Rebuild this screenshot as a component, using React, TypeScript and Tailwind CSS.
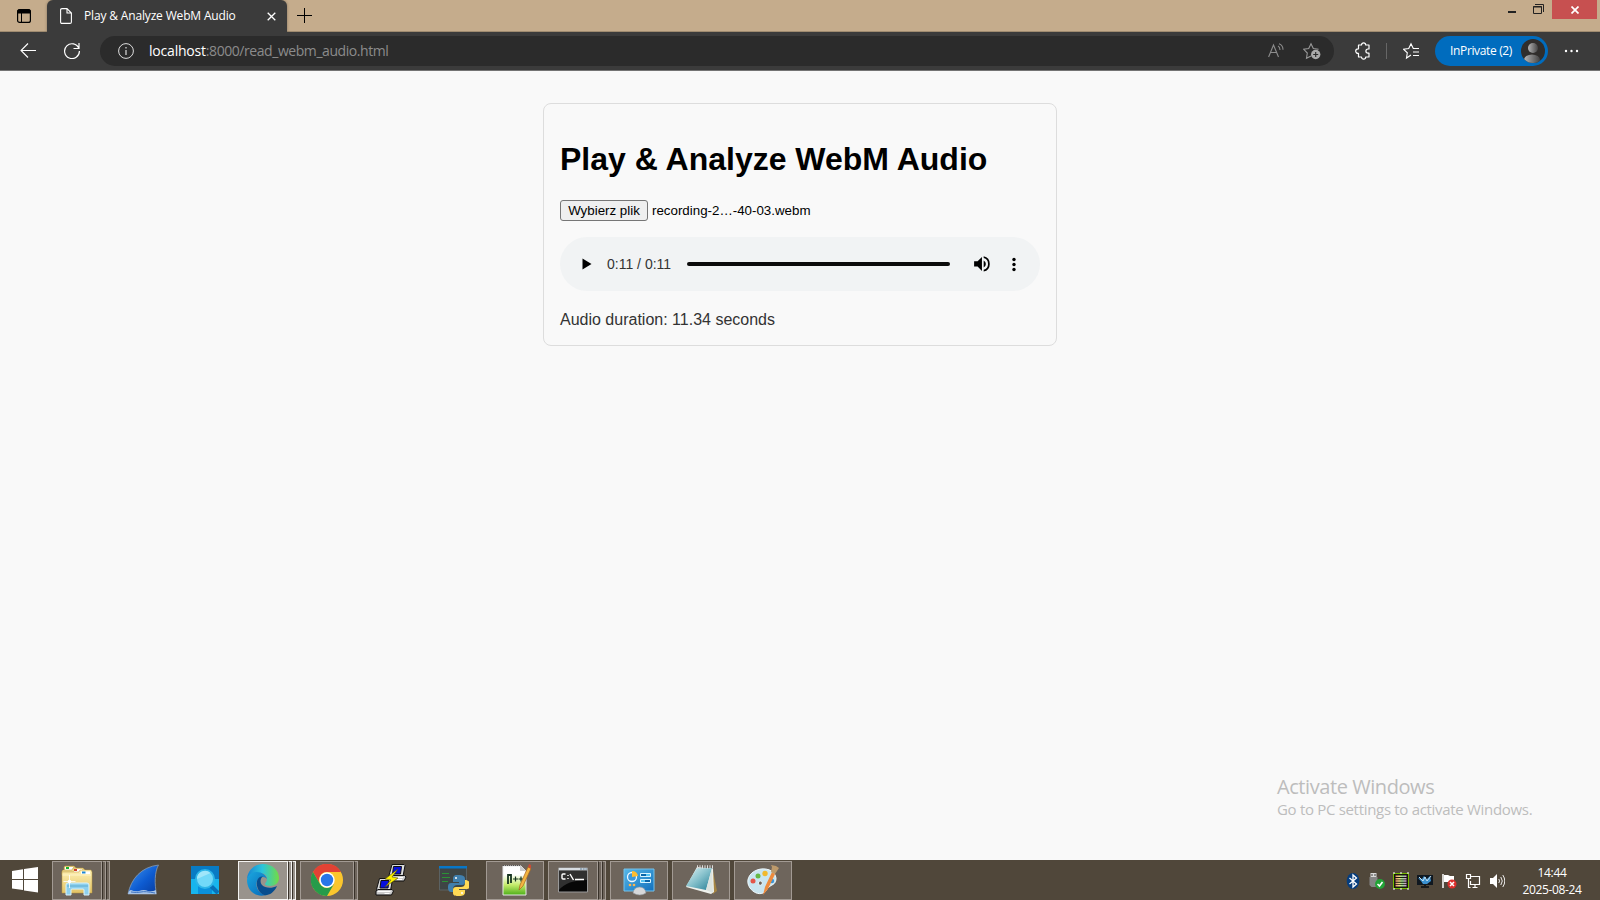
import type { ReactNode } from "react";

const ui = "font-['Open_Sans','Noto_Sans',sans-serif]";
const arial = "font-['Liberation_Sans',Arial,sans-serif]";

function Slot({ children, open = false, active = false, stack = 1 }: { children: ReactNode; open?: boolean; active?: boolean; stack?: number }) {
  const tone = active ? "border-[#f4f3f1] bg-[#99938c]" : open ? "border-[#a29a93] bg-[#6e655c]" : "border-transparent";
  return (
    <div className="flex h-[39px] w-[58px]">
      <div className={`flex min-w-0 flex-1 items-center justify-center border pr-px pb-px ${tone}`}>{children}</div>
      {stack > 1 && <div className={`w-1 border border-l-[#39322a] ${tone}`} />}
      {stack > 2 && <div className={`w-1 border border-l-[#39322a] ${tone}`} />}
    </div>
  );
}

function Art({ children }: { children: ReactNode }) {
  return <svg width="32" height="32" viewBox="0 0 32 32" className="shrink-0">{children}</svg>;
}

function Explorer() {
  return (
    <Art>
      <defs><linearGradient id="folder" x2="0" y2="1"><stop stopColor="#fff2b5" /><stop offset="1" stopColor="#e2c366" /></linearGradient></defs>
      <path d="M3 3l1-1h9l2 2v6H3z" fill="#e6cf7e" stroke="#b8973c" strokeWidth=".5" />
      <path d="M4 3h8v3H4z" fill="#fff" /><path d="M5 3h3v2H5z" fill="#18b32c" />
      <path d="M1 7l1-1h9l1-2h10l2 2v5H1z" fill="#ecd88c" stroke="#b8973c" strokeWidth=".5" />
      <path d="M13 5h8v3h-8z" fill="#fff" /><path d="M13 5h3v2h-3z" fill="#d23c2a" />
      <path d="M1 8h17l1-2h11l1 2v21H1z" fill="url(#folder)" stroke="#b8973c" strokeWidth=".5" />
      <path d="M20 7.500h9v2.500h-9z" fill="#fff" /><path d="M21 7.500h3.500v2H21z" fill="#1e88d2" />
      <path d="M1.500 11H30" stroke="#fff8d0" strokeWidth=".8" />
      <path d="M5 21q0-2 2-2h19q2 0 2 2v10h-5v-5q0-1-1-1H11q-1 0-1 1v5H5z" fill="#8ed0ed" stroke="#d9f3fc" />
      <path d="M6 22h21" stroke="#5cacd2" />
      <path d="M8.500 11v13M2.500 17.500h12" stroke="#fff" strokeWidth=".8" /><circle cx="8.500" cy="17.500" r="1.800" fill="#fff" />
    </Art>
  );
}
function Shark() {
  return (
    <Art>
      <defs><linearGradient id="fin" x2="1" y2="1"><stop stopColor="#4298ef" /><stop offset=".55" stopColor="#0d5bd1" /><stop offset="1" stopColor="#083a9b" /></linearGradient></defs>
      <path d="M1 30C4 15 14 3 31.500 1c-4 7-4 19-2 29z" fill="url(#fin)" stroke="#8d9ba9" strokeWidth=".8" />
      <path d="M1 30q1-4 3-4 4 2 8 1 5-2 9 0 4 1 8-1v4z" fill="#a9c5e8" /><path d="M4 28q6 1 10 0t14 1" stroke="#3f74c1" fill="none" />
    </Art>
  );
}
function Search() {
  return (
    <Art>
      <path d="M2 2h28v28H2z" fill="#0a91dc" /><path d="M2 2h28v13H2z" fill="#087bc4" />
      <path d="M2 15h7v15H2zM23 15h7v15h-7z" fill="#17b5ed" />
      <path d="m22 22 7 7" stroke="#0871b9" strokeWidth="4" />
      <circle cx="16" cy="15" r="9" fill="#72d9f8" stroke="#2db5e8" strokeWidth="2" />
      <path d="M8 15a8 8 0 0 1 13.500-6z" fill="#a0e6fa" />
    </Art>
  );
}
function Edge() {
  return (
    <Art>
      <defs>
        <linearGradient id="edgeTop"><stop stopColor="#1685d4" /><stop offset=".48" stopColor="#2bc4dc" /><stop offset="1" stopColor="#72dc43" /></linearGradient>
        <linearGradient id="edgeMid" y2="1"><stop stopColor="#1aa7df" /><stop offset="1" stopColor="#0868b8" /></linearGradient>
      </defs>
      <path d="M0 16C0 7 7 0 16 0c10 0 16 7 16 14 0 5-4 8-9 8-3 0-5-1-5-2s2-2 2-5c0-4-3-6-8-6-6 0-11 2-12 7" fill="url(#edgeTop)" />
      <path d="M0 16C1 11 5 8 10 8c5 0 9 3 10 7-2-3-8-3-10 2-2 6 2 13 9 14C8 34 0 26 0 16" fill="url(#edgeMid)" />
      <path d="M10 17c1-4 4-5 6-4.500-3 2-3 6-1 8.500 3 3 9 4 15 1-3 7-9 10-13 9-5-2-8-8-7-14" fill="#084d8e" />
    </Art>
  );
}
function Chrome() {
  return (
    <Art>
      <circle cx="16" cy="16" r="16" fill="#fbc62d" />
      <path d="M2 8A16 16 0 0 1 30 8H16a8 8 0 0 0-7 12z" fill="#e24234" />
      <path d="M2 8a16 16 0 0 0 14 24l7-12q-8 8-14 0z" fill="#269b4a" />
      <circle cx="16" cy="16" r="7.700" fill="#fff" /><circle cx="16" cy="16" r="6.200" fill="#2876e8" />
    </Art>
  );
}
function Putty() {
  const computer = <><path d="M4 .500h12l1 1-2 11H2l-1-1z" fill="#ddd" stroke="#111" /><path d="M5.500 2.500h8l-1 7.500H4.500z" fill="#0710dc" stroke="#111" /><path d="m.5 13 2-1.500h14l1.500 1.500-2 4H.5z" fill="#ccc" stroke="#111" /><path d="M2 13.500h13M9 15.500h5" stroke="#fff" /></>;
  return <Art><g transform="translate(13 0)">{computer}</g><g transform="translate(.5 14)">{computer}</g><path d="m23 5-13 10 6 1-6 7 13-9-6-1z" fill="#fff200" stroke="#555000" strokeWidth=".6" /></Art>;
}
function Python() {
  return (
    <Art>
      <path d="M2.500 3h27v23h-27z" fill="#3e4545" stroke="#5b6263" /><path d="M2 2h28v2.500H2z" fill="#0877c7" />
      <path d="M5 9.500h7M5 13.500h8M5 17.500h6" stroke="#2b9234" strokeWidth="1.200" />
      <g transform="translate(11 11)">
        <path d="M10 0C5 0 5 2 5 5v2h6v1H3c-3 0-3 3-3 5s1 4 3 4h2v-3c0-3 2-4 4-4h5c2 0 3-1 3-3V4c0-3-2-4-7-4" fill="#407fae" />
        <path d="M17 5v3c0 3-2 4-4 4H8c-2 0-3 1-3 3v3c0 3 3 3 6 3 4 0 6-1 6-4v-2h-6v-1h8c3 0 3-3 3-5s-2-4-5-4" fill="#ffda55" />
        <circle cx="8" cy="3" r="1" fill="#fff" /><circle cx="14" cy="18" r="1" fill="#fff" />
      </g>
    </Art>
  );
}
function NotepadPlus() {
  return (
    <Art>
      <defs><linearGradient id="npp" y2="1" x2="0"><stop offset=".3" stopColor="#fff" /><stop offset=".65" stopColor="#c5ec6b" /><stop offset="1" stopColor="#4cae18" /></linearGradient></defs>
      <path d="M4 2h18l5 5v24H4z" fill="url(#npp)" stroke="#e8e8e8" /><path d="M4 1.500h17" stroke="#555" strokeDasharray="1 1" /><path d="M21 1v6h6z" fill="#ccc" />
      <path d="M9 20v-9h3v8" fill="none" stroke="#163320" strokeWidth="1.800" /><path d="M16.500 12.500v5M14 15h5M22 12.500v5M19.500 15h5" stroke="#163320" strokeWidth="1.200" />
      <path d="m20 26 1-5L29 3l3 1.500L24 22z" fill="#f3b542" stroke="#a76422" strokeWidth=".7" /><path d="m29 3 1-3 3 1.500-1 3z" fill="#ca4b35" />
    </Art>
  );
}
function Command() {
  return (
    <Art><path d="M1.500 4h29v24h-29z" fill="#070707" stroke="#999" /><path d="M2 4h28v2.500H2z" fill="#d8dde1" /><path d="M23 5h2m.7 0h2m.7 0h1.500" stroke="#5a7990" /><path d="M2 7h28v9Q10 16 2 26z" fill="#303030" /><path d="M8.500 10H6q-1 0-1 1v3q0 1 1 1h2.500M11 11v1M11 14v1M13 10l3.500 6M18 15.500h9" fill="none" stroke="#fff" strokeWidth="1.400" /></Art>
  );
}
function Control() {
  return (
    <Art><defs><linearGradient id="control" y2="1"><stop stopColor="#55b7e8" /><stop offset="1" stopColor="#1270bd" /></linearGradient></defs><path d="M1 5h30v22H1z" fill="url(#control)" stroke="#77c2e9" /><circle cx="9" cy="13" r="4.500" fill="#3b99dc" stroke="#eef7ff" strokeWidth="1.300" /><path d="M9 13V7q5 0 6 5z" fill="#ffbd30" /><path d="M17.500 9.500h10v3h-10zM17.500 15.500h10v3h-10z" fill="#54c2f2" stroke="#d8f4ff" /><path d="M18 11h5M22 17h5" stroke="#0865ab" strokeWidth="2" /><circle cx="7" cy="21" r="1.300" fill="#ffb44c" /><circle cx="11" cy="21" r="1.300" fill="#ffb44c" /><path d="M10 29q1-6 6.500-6t6.500 6q-6 4-13 0" fill="#d6d8da" stroke="#92999d" strokeWidth=".6" /></Art>
  );
}
function Notepad() {
  return (
    <Art><defs><linearGradient id="note" x2="1" y2="1"><stop stopColor="#e0f4f5" /><stop offset=".5" stopColor="#83bfca" /><stop offset="1" stopColor="#267f96" /></linearGradient></defs><path d="m28 7 4 20-4 3-3-20z" fill="#a48443" /><path d="m12 3 16 2 1 23-3 2L1 23z" fill="#eff1ec" /><path d="M12 4h15l-6 22L1 22z" fill="url(#note)" /><path d="m27 4 1 25-7-3z" fill="#dce3df" /><path d="M12 3h16" stroke="#ddd" strokeWidth="3.500" strokeDasharray="1 1.500" /></Art>
  );
}
function Paint() {
  return (
    <Art><path d="M3 24C-2 17 2 9 10 6c8-3 18 0 19 8 0 6-3 6-7 9-3 2-2 4-6 6-5 2-10-1-13-5m9-3c2 1 4-1 3-3s-5-1-3 3" fill="#c9e5f0" fillRule="evenodd" stroke="#eff8fc" /><circle cx="6" cy="17" r="2.500" fill="#e45548" /><circle cx="11" cy="12" r="2.500" fill="#65b845" /><circle cx="18" cy="9.500" r="2.700" fill="#f1b92d" /><circle cx="25" cy="17" r="2.200" fill="#3c94d6" /><path d="m16 31 2-8 7-15 3 2-7 15z" fill="#ee8b3d" /><path d="m24 8 1-5-1-2 5 1 3 2-4 6z" fill="#bd9a6b" /></Art>
  );
}

function Tray() {
  return (
    <div className="flex items-center gap-2">
      <svg width="16" height="18" viewBox="0 0 16 18"><ellipse cx="8" cy="9" rx="6.300" ry="8" fill="#063d7d" /><path d="m4.500 6 7 6-3.500 3V3l3.500 3-7 6" fill="none" stroke="#fff" strokeWidth="1.300" /></svg>
      <svg width="16" height="18" viewBox="0 0 16 18"><path d="M1.500 1h6v4h-6z" fill="#d9d9d9" /><path d="M2.500 2h1v2h-1zm3 0h1v2h-1z" fill="#444" /><path d="M.5 5h8v8l-2 2h-4l-2-2z" fill="#858585" /><circle cx="11" cy="12" r="4.900" fill="#22a437" /><path d="m8.500 12 2 2 3-4" fill="none" stroke="#fff" strokeWidth="1.600" /></svg>
      <svg width="16" height="18" viewBox="0 0 16 18"><defs><linearGradient id="chip"><stop stopColor="#ef8a78" /><stop offset=".35" stopColor="#f2dc80" /><stop offset=".6" stopColor="#9be08e" /><stop offset="1" stopColor="#d68be0" /></linearGradient></defs><path d="M.5 1.500h15v15H.5z" fill="#151b0b" stroke="#75b800" /><path d="M2.500 3.500h11v1.500h-11zm0 2.400h11v1.500h-11zm0 2.400h11v1.500h-11zm0 2.400h11v1.500h-11zm0 2.400h11v1.500h-11z" fill="url(#chip)" /><path d="M0 1h2M7 1h2M14 1h2M0 17h2M7 17h2M14 17h2" stroke="#fff" /></svg>
      <svg width="16" height="18" viewBox="0 0 16 18"><path d="M0 3h16v10H0z" fill="#101820" /><path d="m1 6 4 1 2-3 2 2v2l4-4 1 5-4 3H6L4 9z" fill="#3b91d0" /><path d="m2 5 4 4 2-4 2 4 4-5" fill="none" stroke="#c5e1f1" /><path d="M4 15h8M7 13h2" stroke="#1a1a1a" strokeWidth="2" /></svg>
      <svg width="16" height="18" viewBox="0 0 16 18"><path d="M2 2v14" stroke="#fff" strokeWidth="1.500" /><path d="M3 3h4l2 1h4v7H9l-2-1H3z" fill="#fff" /><circle cx="11" cy="12" r="4.500" fill="#dc2e2b" /><path d="m9 10 4 4m0-4-4 4" stroke="#fff" strokeWidth="1.500" /></svg>
      <svg width="16" height="18" viewBox="0 0 16 18" fill="none" stroke="#fff"><path d="M6 4.500h8.500v8H5.500V9M7.500 15.500h5M10 12.500v3M1.500 2.500h4v4h-4zM3.500 7v8.500h2" strokeWidth="1.200" /></svg>
      <svg width="16" height="18" viewBox="0 0 16 18"><path d="M1 6h3l4-4v14l-4-4H1z" fill="#fff" /><path d="M9.800 7q1.500 2 0 4m2-6q3 4 0 8m2-10q4 6 0 12" fill="none" stroke="#fff" strokeWidth=".9" /></svg>
    </div>
  );
}

export default function App() {
  return (
    <div className={`flex h-[900px] w-[1600px] flex-col overflow-hidden bg-[#f9f9f9] ${ui}`}>
      <header className="flex h-8 items-start border-b border-[#9f8b70] bg-[#c5ac8c]">
        <div className="flex h-8 w-[47px] items-center pl-[17px]"><svg width="14" height="14" viewBox="0 0 14 14" fill="none" stroke="#000"><rect x=".6" y=".6" width="12.800" height="12.800" rx="2" strokeWidth="1.200" /><path d="M1 1h12v3H1z" fill="#000" /><path d="M4.500 4v9.500" /></svg></div>
        <div className="flex h-8 w-[240px] items-center rounded-t-md bg-[#3b3b3b] pr-[11px] pl-[13px] text-white shadow-[0_0_3px_#0005]">
          <svg width="12" height="16" viewBox="0 0 12 16" fill="none" stroke="#fff" strokeWidth="1.100"><path d="M2 .6h5l4.400 4.400v9q0 1.400-1.400 1.400H2Q.6 15.400.6 14V2Q.6.6 2 .6zM7 .6V5h4.400" /></svg>
          <span className="ml-3 flex-1 text-[12px] whitespace-nowrap tracking-[-0.16px]">Play &amp; Analyze WebM Audio</span>
          <svg width="9" height="9" viewBox="0 0 9 9" stroke="#fff" strokeWidth="1.300"><path d="m.7.7 7.600 7.600m0-7.600L.7 8.300" /></svg>
        </div>
        <div className="flex h-[31px] flex-1 items-center pl-[10px]"><svg width="15" height="15" viewBox="0 0 15 15" stroke="#000"><path d="M7.500 0v15M0 7.500h15" /></svg></div>
        <svg width="36" height="18" viewBox="0 0 36 18" fill="none" stroke="#222" className="mr-[8px]"><path d="M0 12h8" strokeWidth="2" /><path d="M25.500 6.500h8v7h-8zM25 7h9" /><path d="M27 4.500h8.500V12" /></svg>
        <div className="mr-[3px] flex h-[19px] w-[45px] items-center justify-center bg-[#c75050]"><svg width="8" height="8" viewBox="0 0 8 8" stroke="#fff" strokeWidth="1.700"><path d="m.5.5 7 7m0-7-7 7" /></svg></div>
      </header>

      <nav className="flex h-[39px] items-center border-b border-[#747474] bg-[#3b3b3b]">
        <svg width="16" height="16" viewBox="0 0 16 16" fill="none" stroke="#fff" strokeWidth="1.100" className="ml-5"><path d="M16 7.500H1M8 .5l-7 7 7 7" /></svg>
        <svg width="16" height="16" viewBox="0 0 16 16" fill="none" stroke="#fff" strokeWidth="1.200" className="ml-7"><path d="M14.900 5.500A7.400 7.400 0 1 0 15.400 8M15 0v5.500H9.500" /></svg>
        <div className="ml-5 flex h-[30px] w-[1234px] items-center rounded-full bg-[#2b2b2b] pr-[13px] pl-[18px]">
          <svg width="16" height="16" viewBox="0 0 16 16" fill="none" stroke="#ddd"><circle cx="8" cy="8" r="7.400" /><path d="M8 7v5M8 4v1.500" strokeWidth="1.200" /></svg>
          <div className="ml-[15px] flex-1 pb-px text-[14px] whitespace-nowrap tracking-[-0.44px] text-[#8b8b8b]"><span className="tracking-[-0.2px] text-white">localhost</span>:8000/read_webm_audio.html</div>
          <svg width="16" height="16" viewBox="0 0 16 16" fill="none" stroke="#8c8c8c" strokeWidth="1.100"><path d="M.6 14 5.500 2l5 12M2.500 9.500h6M10 3q2 1 2 4M11 .8q4 1.500 4 6" /></svg>
          <svg width="18" height="18" viewBox="0 0 18 18" fill="none" stroke="#999" strokeWidth="1.100" className="ml-[19px]"><path d="M8 14 3.500 16.200l.8-5.200L.7 7.300l5-.8L8 1.700l2.300 4.800 5.300.8" /><circle cx="12.700" cy="12.500" r="4.700" fill="#aaa" stroke="none" /><path d="M12.700 10v5m-2.500-2.500h5" stroke="#2b2b2b" /></svg>
        </div>
        <svg width="17" height="18" viewBox="0 0 17 18" fill="none" stroke="#fff" strokeWidth="1.200" strokeLinejoin="round" className="ml-[21px]"><path d="M3.500 3h3a2.100 2.100 0 0 1 4.200 0h3.300v4h-1a2.100 2.100 0 0 0 0 4.200h1V15h-3.300a2.100 2.100 0 0 1-4.200 0h-3v-3.600H3a2.300 2.300 0 0 1 0-4.600h.5z" /></svg>
        <div className="ml-[14px] h-4 w-px bg-[#666]" />
        <svg width="17" height="18" viewBox="0 0 17 18" fill="none" stroke="#fff" strokeWidth="1.100" className="ml-4"><path d="m8 13-4.500 3 .8-5.200L.7 7.300l5-.8L8 1.700l2.300 4.800H16M10 10h6M10 13.500h6" /></svg>
        <div className="ml-[15px] flex h-[30px] w-[113px] items-center rounded-full bg-[#006cbe] pr-[3px] pl-[15px] text-[12px] whitespace-nowrap tracking-[-0.35px] text-white">
          <span className="flex-1">InPrivate (2)</span>
          <svg width="24" height="24" viewBox="0 0 24 24"><defs><linearGradient id="person"><stop stopColor="#b5b5b5" /><stop offset="1" stopColor="#444" /></linearGradient><clipPath id="avatar"><circle cx="12" cy="12" r="12" /></clipPath></defs><g clipPath="url(#avatar)"><path fill="#302e2c" d="M0 0h24v24H0z" /><circle cx="12" cy="9" r="5" fill="url(#person)" /><ellipse cx="11" cy="21" rx="8" ry="5.500" fill="url(#person)" /></g></svg>
        </div>
        <svg width="15" height="4" viewBox="0 0 15 4" fill="#fff" className="ml-4"><circle cx="2" cy="2" r="1.200" /><circle cx="7.500" cy="2" r="1.200" /><circle cx="13" cy="2" r="1.200" /></svg>
      </nav>

      <main className="flex flex-1 flex-col items-center pt-8">
        <section className={`h-[243px] w-[514px] rounded-lg border border-[#ddd] px-4 ${arial}`}>
          <h1 className="mt-[37px] text-[32px] leading-[37px] font-bold whitespace-nowrap text-black">Play &amp; Analyze WebM Audio</h1>
          <div className="mt-[22px] flex h-[21px] items-center gap-1 text-[13.333px] whitespace-nowrap text-black">
            <button className="flex h-[21px] w-[88px] items-center justify-center rounded-[3px] border border-[#767676] bg-[#efefef]">Wybierz plik</button>
            <span>recording-2…-40-03.webm</span>
          </div>
          <div className="mt-4 flex h-[54px] items-center rounded-full bg-[#f1f3f4] pl-[22px]">
            <svg width="10" height="12" viewBox="0 0 10 12"><path d="M.5.500v11L9.500 6z" /></svg>
            <span className="ml-[15px] w-[80px] text-[14px] whitespace-nowrap text-[#333]">0:11 / 0:11</span>
            <div className="h-1 w-[263px] rounded-full bg-[#0b0b0b]" />
            <svg width="18" height="18" viewBox="3 3 18 18" className="ml-[23px]"><path d="M3 9v6h4l5 5V4L7 9zm13.500 3A4.500 4.500 0 0 0 14 7.970v8.050A4.500 4.500 0 0 0 16.500 12M14 3.230v2.060a7 7 0 0 1 0 13.420v2.060a9 9 0 0 0 0-17.540" transform="translate(1.500 1.500) scale(.87)" /></svg>
            <svg width="4" height="15" viewBox="0 0 4 15" className="ml-[21px]"><circle cx="2" cy="2.500" r="1.700" /><circle cx="2" cy="7.500" r="1.700" /><circle cx="2" cy="12.500" r="1.700" /></svg>
          </div>
          <p className="mt-5 text-[16px] leading-[18px] whitespace-nowrap text-[#333]">Audio duration: 11.34 seconds</p>
        </section>
        <aside className="mt-auto mr-[67px] mb-[41px] w-[256px] self-end whitespace-nowrap text-[#bdbdbd]">
          <div className="text-[20px] leading-[25px] tracking-[-0.43px]">Activate Windows</div>
          <div className="text-[15px] leading-5 tracking-[-0.31px]">Go to PC settings to activate Windows.</div>
        </aside>
      </main>

      <footer className="flex h-10 items-start bg-[#50473a] pt-px">
        <div className="flex h-[39px] w-[52px] items-center pb-px pl-3"><svg width="26" height="26" viewBox="0 0 26 26" fill="#fff"><path d="m0 4 11-1.700V12H0zM12 2l14-2v12H12zM0 13h11v10L0 21.500zM12 13h14v12.500l-14-2z" /></svg></div>
        <div className="flex gap-1">
          <Slot open stack={3}><Explorer /></Slot><Slot><Shark /></Slot><Slot><Search /></Slot><Slot active stack={3}><Edge /></Slot><Slot open stack={2}><Chrome /></Slot><Slot><Putty /></Slot><Slot><Python /></Slot><Slot open><NotepadPlus /></Slot><Slot open stack={3}><Command /></Slot><Slot open><Control /></Slot><Slot open><Notepad /></Slot><Slot open><Paint /></Slot>
        </div>
        <div className="ml-auto flex h-[39px] items-center"><Tray /><div className="ml-4 mr-[17px] w-[62px] text-center text-[12px] leading-[17px] whitespace-nowrap tracking-[-0.35px] text-white">14:44<br />2025-08-24</div></div>
      </footer>
    </div>
  );
}
